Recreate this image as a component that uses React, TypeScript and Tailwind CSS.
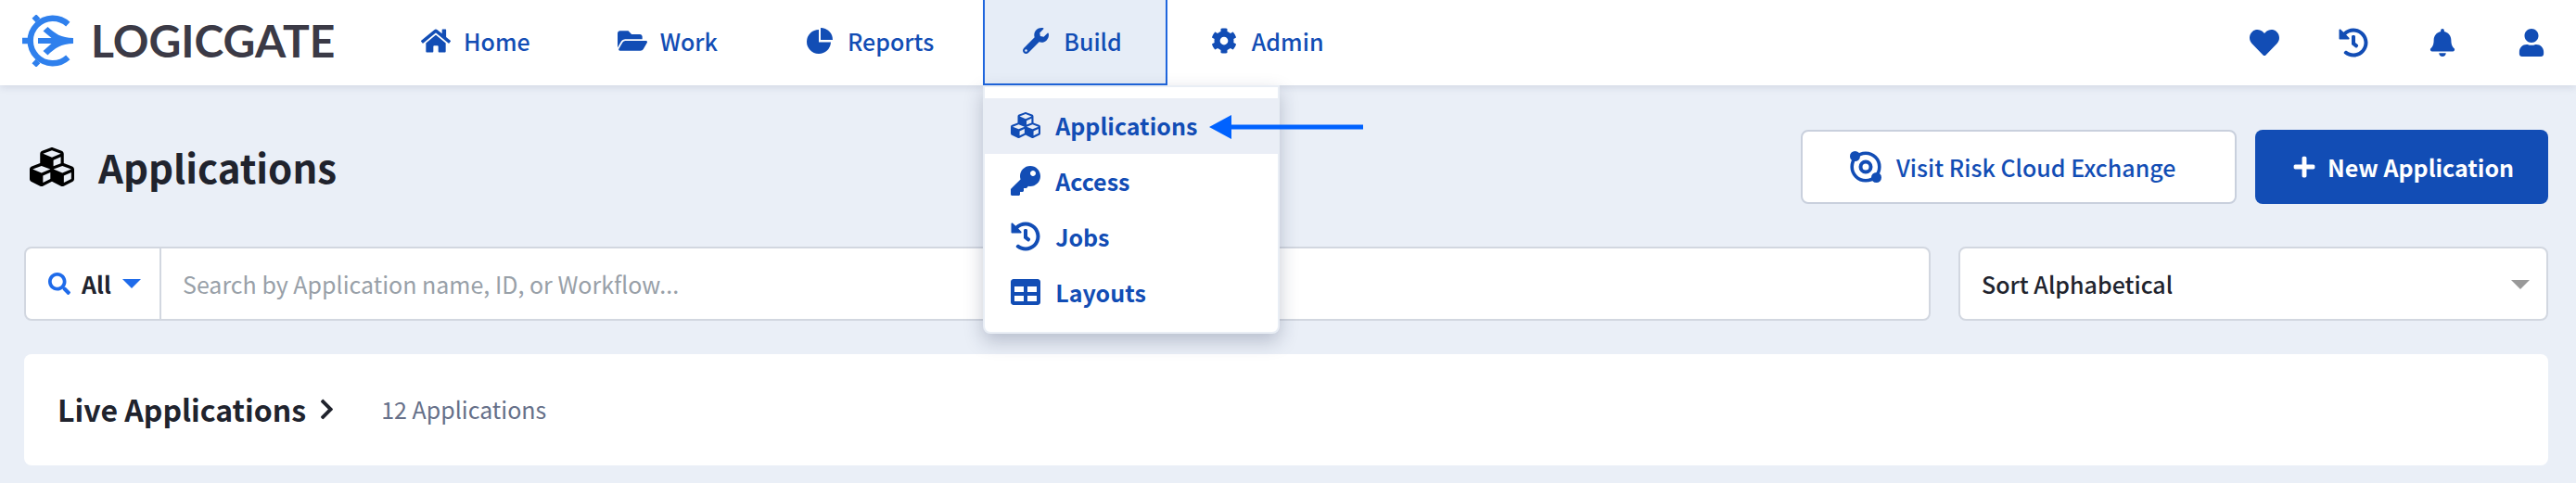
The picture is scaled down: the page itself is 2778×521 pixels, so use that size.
import type { ReactNode } from 'react';
import {
  FaBell,
  FaChevronRight,
  FaCog,
  FaCubes,
  FaFolderOpen,
  FaHeart,
  FaHistory,
  FaHome,
  FaKey,
  FaPlus,
  FaSearch,
  FaTable,
  FaUser,
  FaWrench,
} from 'react-icons/fa';

interface NavItem {
  label: string;
  icon: ReactNode;
  active?: boolean;
}

const PieIcon = () => (
  <svg viewBox="0 0 28 28" className="size-7" fill="currentColor">
    <path d="M13 2V15.500H26A13 13 0 1 1 13 2Z" />
    <path d="M15 0A13 13 0 0 1 28 13H15Z" />
  </svg>
);

const navItems: NavItem[] = [
  { label: 'Home', icon: <FaHome size={32} /> },
  { label: 'Work', icon: <FaFolderOpen size={32} /> },
  { label: 'Reports', icon: <PieIcon /> },
  { label: 'Build', icon: <FaWrench size={28} />, active: true },
  { label: 'Admin', icon: <FaCog size={28} /> },
];

const buildMenu: NavItem[] = [
  { label: 'Applications', icon: <FaCubes size={32} />, active: true },
  { label: 'Access', icon: <FaKey size={32} /> },
  { label: 'Jobs', icon: <FaHistory size={32} /> },
  { label: 'Layouts', icon: <FaTable size={32} /> },
];

const quickLinks: NavItem[] = [
  { label: 'Favorites', icon: <FaHeart size={32} /> },
  { label: 'History', icon: <FaHistory size={32} /> },
  { label: 'Notifications', icon: <FaBell size={30} /> },
  { label: 'Profile', icon: <FaUser size={30} /> },
];

const Logo = () => (
  <a href="#" aria-label="LogicGate" className="flex w-[413px] shrink-0 items-center gap-[18px] pb-1 pl-6 text-[#3b3a46]">
    <svg viewBox="0 0 56 56" className="size-14 shrink-0" fill="none">
      <g stroke="#2f80ed" strokeWidth="6.4">
        <path d="M49.3 10.2A24.2 24.2 0 1 0 49.3 45.8" />
        <path d="M0 28H7M17 6L12.800 1.600M17 50L12.800 54.400" />
      </g>
      <path
        d="M17 25H31.500L22.500 17.500L27.500 13C35 20 42 25 55 25V31C42 31 35 36 27.500 43.500L22.500 39L31.500 31H17Z"
        fill="#2f80ed"
      />
    </svg>
    <span className="font-['Lato',sans-serif] text-5xl leading-none font-bold">LOGICGATE</span>
  </a>
);

const ExchangeIcon = () => (
  <svg viewBox="0 0 34 34" className="size-[34px] shrink-0" fill="none">
    <circle cx="17" cy="17" r="14.800" stroke="currentColor" strokeWidth="3.600" />
    <circle cx="17" cy="17" r="5.500" stroke="currentColor" strokeWidth="4" />
    <circle cx="5.500" cy="5.500" r="5.500" fill="currentColor" />
    <circle cx="28.500" cy="28.500" r="5.500" fill="currentColor" />
  </svg>
);

const Caret = ({ className }: { className: string }) => (
  <svg viewBox="0 0 20 10" className={className} fill="currentColor">
    <path d="M0 0H20L10 10Z" />
  </svg>
);

const BuildMenu = () => (
  <div className="absolute top-full left-0 z-20 w-80 rounded-b-lg border-2 border-[#e9eef5] bg-white py-3 shadow-[0_8px_20px_rgba(30,45,80,0.25)]">
    <ul>
      {buildMenu.map((item) => (
        <li key={item.label} className={item.active ? 'relative bg-[#eaeef6]' : ''}>
          <a href="#" className="flex h-15 items-center gap-4 px-7 pb-0.5 font-bold">
            <span className="flex w-8 justify-center">{item.icon}</span>
            {item.label}
          </a>
          {/* Pointer to the current entry */}
          {item.active && (
            <svg viewBox="0 0 166 26" className="absolute top-[18px] left-[242px] w-[166px]" fill="#0062ff">
              <path d="M0 13L24 0V10.500H166V15.500H24V26Z" />
            </svg>
          )}
        </li>
      ))}
    </ul>
  </div>
);

const Header = () => (
  <header className="relative z-10 flex h-23 items-stretch bg-white text-[#124db5] shadow-[0_2px_8px_rgba(30,45,80,0.12)]">
    <Logo />
    <nav className="flex gap-1">
      {navItems.map((item) => (
        <div key={item.label} className="relative">
          <a
            href="#"
            className={
              item.active
                ? 'flex h-full items-center gap-[10px] border-2 border-t-0 border-[#1f66dd] bg-[#e6edf7] pr-[47px] pb-0.5 pl-[35px] font-medium'
                : 'flex h-full items-center gap-[10px] border-2 border-t-0 border-transparent pr-[47px] pb-0.5 pl-[35px] font-medium'
            }
          >
            <span className="flex w-10 justify-center">{item.icon}</span>
            {item.label}
          </a>
          {item.active && <BuildMenu />}
        </div>
      ))}
    </nav>
    <div className="ml-auto flex items-center gap-16 pr-8">
      {quickLinks.map((item) => (
        <button key={item.label} type="button" aria-label={item.label} className="flex w-8 justify-center">
          {item.icon}
        </button>
      ))}
    </div>
  </header>
);

export default function App() {
  return (
    <div className="min-h-screen bg-[#eaeff7] font-['Noto_Sans_CJK_SC',sans-serif] text-[25px] leading-8 text-[#20232d]">
      <Header />

      <main className="pt-12 pr-[30px] pb-5 pl-[26px]">
        {/* Title and actions */}
        <div className="flex h-20 items-center gap-5">
          <h1 className="mr-auto flex items-center gap-[26px] pl-1.5 text-[42px] leading-none font-bold">
            <FaCubes size={48} className="text-black" />
            Applications
          </h1>
          <button
            type="button"
            className="flex h-20 w-[470px] items-center gap-4 rounded-lg border-2 border-[#c9d0dd] bg-white pl-[51px] font-medium text-[#124db5]"
          >
            <ExchangeIcon />
            Visit Risk Cloud Exchange
          </button>
          <button
            type="button"
            className="flex h-20 w-[316px] items-center gap-3 rounded-lg bg-[#124db5] pl-10 font-bold text-white"
          >
            <FaPlus size={26} />
            New Application
          </button>
        </div>

        {/* Search and sort */}
        <div className="mt-[46px] flex gap-[30px]">
          <div className="flex h-20 flex-1 overflow-hidden rounded-lg border-2 border-[#d2d7e0] bg-white">
            <button
              type="button"
              aria-haspopup="listbox"
              className="flex w-[146px] items-center border-r-2 border-[#d2d7e0] pl-6 font-bold"
            >
              <FaSearch size={24} className="mr-3 text-[#1f6bea]" />
              All
              <Caret className="ml-3 w-5 text-[#1f6bea]" />
            </button>
            <input
              type="text"
              aria-label="Search applications"
              placeholder="Search by Application name, ID, or Workflow..."
              className="flex-1 px-[23px] outline-none placeholder:text-[#98a0a8]"
            />
          </div>
          <div className="relative w-[636px]">
            <select
              aria-label="Sort applications"
              className="h-20 w-full appearance-none rounded-lg border-2 border-[#d2d7e0] bg-white pl-[23px] font-medium"
            >
              <option>Sort Alphabetical</option>
            </select>
            <Caret className="pointer-events-none absolute top-9 right-5 w-5 text-[#999]" />
          </div>
        </div>

        {/* Live applications */}
        <section className="mt-9 flex h-30 items-center rounded-lg bg-white pb-0.5 pl-9">
          <button type="button" className="flex items-center gap-2.5 text-[32px] leading-10 font-bold">
            Live Applications
            <FaChevronRight size={25} />
          </button>
          <span className="ml-[46px] text-[#667089]">12 Applications</span>
        </section>
      </main>
    </div>
  );
}
